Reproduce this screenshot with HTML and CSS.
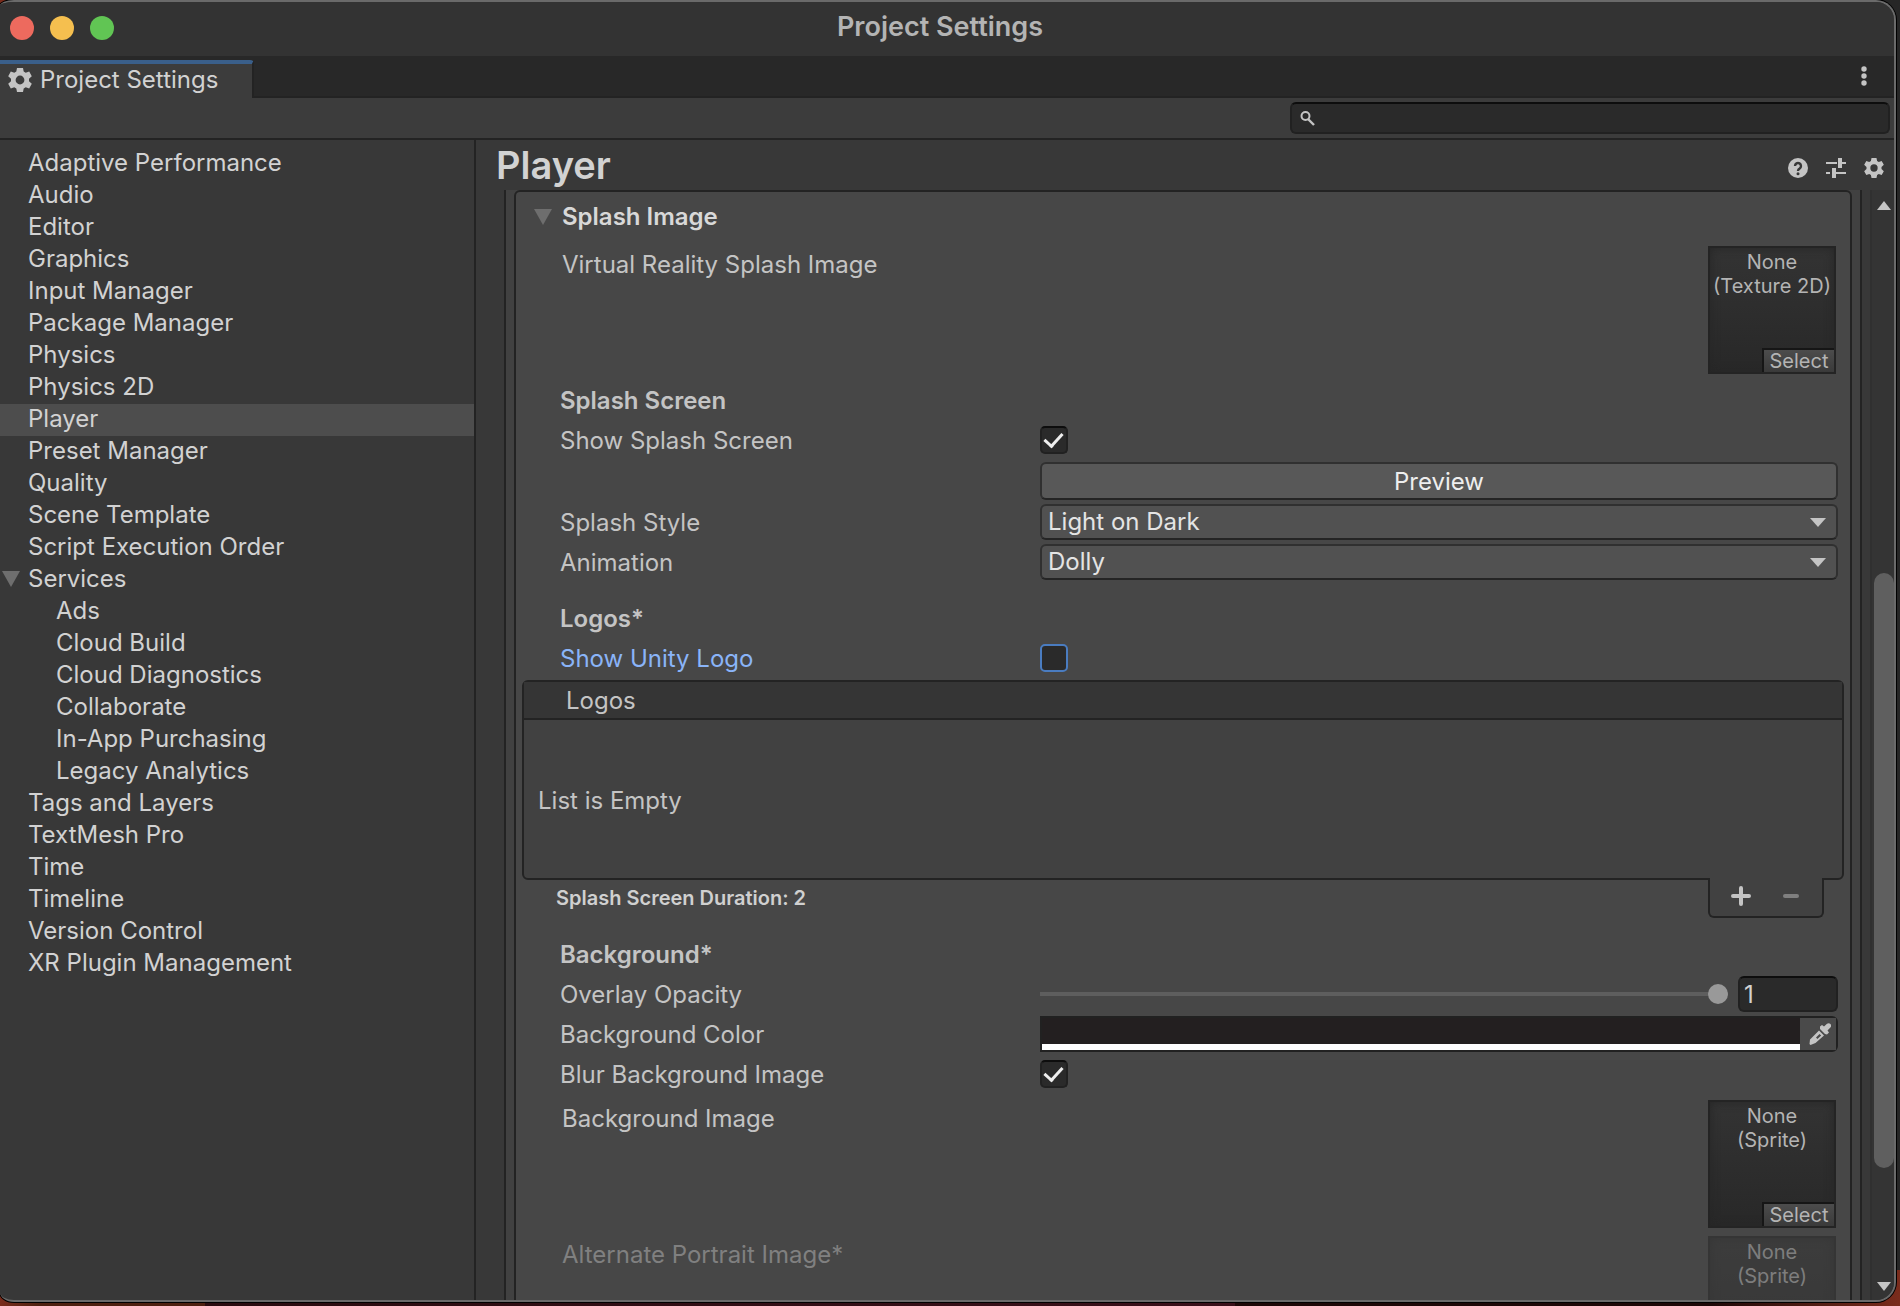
FILE: index.html
```
<!DOCTYPE html>
<html lang="en">
<head>
  <meta charset="UTF-8">
  <meta name="viewport" content="width=device-width, initial-scale=1.0">
  <title>Project Settings</title>
  <link rel="stylesheet" href="styles.css">
</head>
<body>
  <!-- shared icons -->
  <svg class="defs" width="0" height="0">
    <symbol id="gear" viewBox="0 0 24 24">
      <path fill-rule="evenodd" d="M9 0h6l.7 3.6 2 1.2 3.5-1.2 2.6 4.6L21 10.8v2.4l2.8 2.6-2.6 4.6-3.5-1.2-2 1.2L15 24H9l-.7-3.6-2-1.2-3.5 1.2L.2 15.800 3 13.200v-2.400L.2 8.200l2.600-4.600 3.500 1.200 2-1.200zM12 7.600a4.400 4.400 0 1 0 0 8.800 4.400 4.400 0 0 0 0-8.800z"/>
    </symbol>
  </svg>

  <div class="window">
    <header class="titlebar">
      <div class="lights">
        <button class="light red" aria-label="Close"></button>
        <button class="light yellow" aria-label="Minimize"></button>
        <button class="light green" aria-label="Zoom"></button>
      </div>
      <h1>Project Settings</h1>
    </header>

    <div class="tabbar">
      <button class="tab"><svg class="tab_icon"><use href="#gear"/></svg>Project Settings</button>
      <button class="icon_btn more" aria-label="More">
        <svg width="6" height="20" viewBox="0 0 6 20"><circle cx="3" cy="3" r="2.700"/><circle cx="3" cy="10" r="2.700"/><circle cx="3" cy="17" r="2.700"/></svg>
      </button>
    </div>

    <div class="toolbar">
      <label class="search">
        <svg width="16" height="16" viewBox="0 0 16 16"><circle cx="5.500" cy="6" r="4" fill="none" stroke="#c4c4c4" stroke-width="2"/><path d="M8 9l6 6" stroke="#c4c4c4" stroke-width="2.400"/></svg>
        <input type="text" aria-label="Search">
      </label>
    </div>

    <div class="main">
      <nav class="sidebar">
        <ul>
          <li><a href="#">Adaptive Performance</a></li>
          <li><a href="#">Audio</a></li>
          <li><a href="#">Editor</a></li>
          <li><a href="#">Graphics</a></li>
          <li><a href="#">Input Manager</a></li>
          <li><a href="#">Package Manager</a></li>
          <li><a href="#">Physics</a></li>
          <li><a href="#">Physics 2D</a></li>
          <li><a href="#" class="on">Player</a></li>
          <li><a href="#">Preset Manager</a></li>
          <li><a href="#">Quality</a></li>
          <li><a href="#">Scene Template</a></li>
          <li><a href="#">Script Execution Order</a></li>
          <li>
            <a href="#" class="parent"><svg class="fold" viewBox="0 0 18 16"><path d="M0 0h18L9 16z"/></svg>Services</a>
            <ul class="sub">
              <li><a href="#">Ads</a></li>
              <li><a href="#">Cloud Build</a></li>
              <li><a href="#">Cloud Diagnostics</a></li>
              <li><a href="#">Collaborate</a></li>
              <li><a href="#">In-App Purchasing</a></li>
              <li><a href="#">Legacy Analytics</a></li>
            </ul>
          </li>
          <li><a href="#">Tags and Layers</a></li>
          <li><a href="#">TextMesh Pro</a></li>
          <li><a href="#">Time</a></li>
          <li><a href="#">Timeline</a></li>
          <li><a href="#">Version Control</a></li>
          <li><a href="#">XR Plugin Management</a></li>
        </ul>
      </nav>

      <section class="content">
        <div class="content_head">
          <h2>Player</h2>
          <div class="head_icons">
            <button class="icon_btn" aria-label="Help">
              <svg width="20" height="20" viewBox="0 0 20 20"><circle cx="10" cy="10" r="10"/><path d="M7 8a3 3 0 1 1 4.500 2.600Q10 11.400 10 13" fill="none" stroke="#383838" stroke-width="2.400"/><circle cx="10" cy="15.800" r="1.500" fill="#383838"/></svg>
            </button>
            <button class="icon_btn" aria-label="Presets">
              <svg width="20" height="20" viewBox="0 0 20 20"><path d="M0 4h11v2H0zM12 0h4v4h4v2h-4v4h-4zM0 14h4v2H0zM6 10h4v4h10v2H10v4H6z"/></svg>
            </button>
            <button class="icon_btn" aria-label="Settings">
              <svg width="20" height="20"><use href="#gear"/></svg>
            </button>
          </div>
        </div>

        <div class="scroll">
          <div class="outer">
            <div class="inner">
              <h3 class="foldout"><svg class="fold" viewBox="0 0 18 16"><path d="M0 0h18L9 16z"/></svg>Splash Image</h3>

              <div class="object_row">
                <span class="object_label">Virtual Reality Splash Image</span>
                <div class="thumb">None<br>(Texture 2D)<button class="select_btn">Select</button></div>
              </div>

              <div class="fields">
                <h4>Splash Screen</h4>
                <div class="row">
                  <label for="showSplash">Show Splash Screen</label>
                  <input type="checkbox" id="showSplash" checked>
                </div>
                <div class="row preview_row">
                  <button class="preview">Preview</button>
                </div>
                <div class="row">
                  <label for="style">Splash Style</label>
                  <div class="dropdown">
                    <select id="style"><option>Light on Dark</option><option>Dark on Light</option></select>
                  </div>
                </div>
                <div class="row">
                  <label for="anim">Animation</label>
                  <div class="dropdown">
                    <select id="anim"><option>Dolly</option><option>Static</option><option>Custom</option></select>
                  </div>
                </div>

                <h4>Logos*</h4>
                <div class="row changed">
                  <label for="showLogo">Show Unity Logo</label>
                  <input type="checkbox" id="showLogo">
                </div>
              </div>

              <div class="list">
                <div class="list_head">Logos</div>
                <div class="list_body">List is Empty</div>
              </div>
              <div class="list_foot">
                <p>Splash Screen Duration: 2</p>
                <div class="list_btns">
                  <button class="icon_btn" aria-label="Add"><svg width="20" height="20" viewBox="0 0 20 20"><path d="M10 2v16M2 10h16" stroke="#c4c4c4" stroke-width="4" stroke-linecap="round"/></svg></button>
                  <button class="icon_btn" aria-label="Remove" disabled><svg width="20" height="20" viewBox="0 0 20 20"><path d="M4 10h12" stroke="#7f7f7f" stroke-width="4" stroke-linecap="round"/></svg></button>
                </div>
              </div>

              <div class="fields">
                <h4>Background*</h4>
                <div class="row">
                  <label for="opacity">Overlay Opacity</label>
                  <div class="slider">
                    <input type="range" id="opacity" min="0" max="1" step="0.01" value="1">
                    <input type="text" value="1" aria-label="Overlay Opacity value">
                  </div>
                </div>
                <div class="row">
                  <label for="color">Background Color</label>
                  <div class="color">
                    <button class="swatch" id="color" aria-label="Background Color"></button>
                    <button class="picker" aria-label="Pick color">
                      <svg width="22" height="22" viewBox="0 0 22 22"><path d="M11 3.500l2-1.500 2 1.500L18 .8q2-1.200 3.400.2t.2 3.200L18.500 7.500 20 9.500 18 11.500 16 11 11 6z"/><path fill-rule="evenodd" d="M10 7.500l5 5L6.500 20 1.500 22l-1-1 .5-4.500zM10.500 11l-3.500 3.600 1.400 1.400 3.800-3.400z"/></svg>
                    </button>
                  </div>
                </div>
                <div class="row">
                  <label for="blur">Blur Background Image</label>
                  <input type="checkbox" id="blur" checked>
                </div>
              </div>

              <div class="object_row">
                <span class="object_label">Background Image</span>
                <div class="thumb">None<br>(Sprite)<button class="select_btn">Select</button></div>
              </div>
              <div class="object_row disabled">
                <span class="object_label">Alternate Portrait Image*</span>
                <div class="thumb">None<br>(Sprite)</div>
              </div>
            </div>
          </div>

          <div class="scrollbar">
            <svg width="14" height="9" viewBox="0 0 14 9"><path d="M7 0l7 9H0z"/></svg>
            <div class="track"><div class="bar"></div></div>
            <svg width="14" height="9" viewBox="0 0 14 9"><path d="M0 0h14L7 9z"/></svg>
          </div>
        </div>
      </section>
    </div>
  </div>
</body>
</html>
```

FILE: styles.css
```
:root {
  --line: #232323;
  --text: #c4c4c4;
  --label_width: 480px;
}

* {margin: 0; padding: 0; box-sizing: border-box;}
ul {list-style: none;}
a {color: inherit; text-decoration: none;}
button, input, select {font: inherit; color: inherit; border: 0; background: none; outline: none;}
svg {fill: var(--text); flex: none;}
.defs {position: absolute;}

/* desktop behind the window */
body {height: 100vh; padding: 0 4px 4px 0; overflow: hidden; background: linear-gradient(#262626, #262626) right top / 20px calc(100% - 36px) no-repeat, linear-gradient(90deg, #7a2c1c 0, #4d2010 40px, #4d2010 205px, #2a0c10 205px, #3a101a 65%, #1e0808 65%, #1e0808 90%, #7a2c1c 100%); font-family: Inter, "Liberation Sans", sans-serif; font-size: 24px; line-height: 32px; font-optical-sizing: none; color: var(--text);}

.window {display: flex; flex-direction: column; height: 100%; overflow: hidden; border: 2px solid #6a6a6a; border-left: 0; border-radius: 14px 20px 20px 14px / 6px 20px 20px 10px; background: #383838; box-shadow: 0 0 0 1px #000;}

/* title bar */
.titlebar {display: flex; align-items: center; height: 54px; flex: none; padding: 0 128px 2px 10px; background: #333;}
.titlebar h1 {flex: 1; text-align: center; font-size: 27px; font-weight: 600; line-height: 28px; padding-bottom: 2px; color: #b4b4b4;}
.lights {display: flex; gap: 16px;}
.light {width: 24px; height: 24px; border-radius: 50%;}
.red {background: #ed6a5e;}
.yellow {background: #f5bf4f;}
.green {background: #61c554;}

.tabbar {display: flex; justify-content: space-between; height: 42px; flex: none; padding-top: 4px; background: linear-gradient(#282828 40px, var(--line) 40px);}
.tab {display: flex; align-items: center; gap: 8px; width: 254px; padding: 0 0 2px 8px; border-top: 4px solid #3a5f8a; border-right: 2px solid var(--line); border-top-right-radius: 4px; background: #3c3c3c; color: #d2d2d2;}
.tab_icon {width: 24px; height: 24px;}
.icon_btn {display: flex; align-items: center; justify-content: center;}
.more {height: 32px; margin-right: 27px;}

.toolbar {display: flex; justify-content: flex-end; height: 42px; flex: none; padding: 4px; border-bottom: 2px solid var(--line); background: #3c3c3c;}
.search {display: flex; align-items: center; width: 600px; height: 32px; padding: 0 8px; border: 2px solid #212121; border-top-color: #0d0d0d; border-radius: 6px; background: #2a2a2a;}
.search input {flex: 1;}

.main {display: flex; flex: 1; min-height: 0;}

/* sidebar */
.sidebar {width: 476px; flex: none; padding-top: 8px; border-right: 2px solid var(--line); color: #d2d2d2;}
.sidebar a {display: block; padding-left: 28px; height: 32px; line-height: 30px;}
.sidebar .sub a {padding-left: 56px;}
.sidebar .on {background: #4d4d4d;}
.sidebar .parent {display: flex; align-items: center; gap: 8px; padding: 0 0 2px 2px;}
.fold {width: 18px; height: 16px; fill: #6e6e6e;}

/* content */
.content {display: flex; flex-direction: column; flex: 1; min-width: 0;}
.content_head {display: flex; justify-content: space-between; align-items: center; height: 50px; flex: none; padding: 0 10px 0 20px;}
.content_head h2 {font-size: 38px; font-weight: 600; color: #d2d2d2;}
.head_icons {display: flex; gap: 18px; padding-top: 6px;}

.scroll {display: flex; flex: 1; min-height: 0; overflow: hidden;}
.outer {flex: 1; min-width: 0; height: max-content; margin: 0 8px 0 28px; padding: 0 8px; border: solid var(--line); border-width: 0 2px; background: #414141;}
.inner {border: 2px solid var(--line); border-radius: 6px; background: #474747;}

.foldout {display: flex; align-items: center; gap: 10px; height: 54px; padding: 0 0 4px 18px; font-size: 24px; font-weight: 600; color: #d8d8d8;}
.object_row {display: flex; justify-content: space-between; margin-bottom: 8px; padding: 0 14px 0 46px;}
.fields + .object_row {margin-top: 8px;}
.object_label {padding-top: 3px;}
.thumb {position: relative; width: 128px; height: 128px; padding-top: 2px; border: 2px solid #242424; background: linear-gradient(#333, #282828); font-size: 20px; line-height: 24px; text-align: center; color: #b4b4b4; box-shadow: inset 0 0 10px #262626;}
.select_btn {position: absolute; right: 0; bottom: 0; width: 72px; height: 24px; border: solid #161616; border-width: 2px 0 0 2px; background: linear-gradient(#4c4c4c, #3a3a3a); line-height: 20px;}
.disabled {color: #808080;}
.disabled .thumb {opacity: .5;}

.fields {padding: 0 12px 0 44px;}
.fields h4 {height: 40px; padding-top: 3px; font-size: 24px; font-weight: 600;}
.row {display: grid; grid-template-columns: var(--label_width) 1fr; align-items: center; height: 36px; margin-bottom: 4px;}
.row label {padding-top: 2px;}
.row + h4 {margin-top: 20px;}
.row:last-child {margin-bottom: 4px;}
.preview_row {height: 38px;}
.preview {grid-column: 2; height: 38px; padding-top: 2px; border: 2px solid #303030; border-bottom-color: #242424; border-radius: 6px; background: #585858; color: #eee;}
.dropdown {position: relative; height: 36px;}
.dropdown select {appearance: none; width: 100%; height: 36px; padding: 0 6px; border: 2px solid #303030; border-bottom-color: #242424; border-radius: 6px; background: #515151; color: #e4e4e4;}
.dropdown::after {content: ""; position: absolute; right: 12px; top: 14px; border: solid transparent; border-width: 9px 8px 0; border-top-color: var(--text); pointer-events: none;}

input[type=checkbox] {appearance: none; display: flex; align-items: center; justify-content: center; width: 28px; height: 28px; border: 2px solid #212121; border-top-color: #0d0d0d; border-radius: 5px; background: #2a2a2a;}
input[type=checkbox]:checked::before {content: ""; width: 8px; height: 15px; margin: 0 2px 4px 0; border: solid #eee; border-width: 0 3px 3px 0; transform: rotate(42deg);}
.changed {color: #8ab4f8;}
.changed input[type=checkbox] {border-color: #4a7cc0;}

/* logo list */
.list {height: 200px; margin: 0 6px; border: 2px solid var(--line); border-radius: 6px; background: #414141;}
.list_head {height: 38px; padding: 3px 42px 0; border-bottom: 2px solid var(--line); background: #353535;}
.list_body {display: flex; align-items: center; height: 158px; padding: 4px 0 0 14px;}
.list_foot {display: flex; justify-content: space-between; height: 56px; padding: 0 26px 0 40px;}
.list_foot p {padding-top: 2px; font-size: 20px; font-weight: 600; color: #d0d0d0;}
.list_btns {display: flex; justify-content: center; gap: 30px; position: relative; width: 116px; height: 40px; margin-top: -2px; padding-bottom: 2px; border: 2px solid var(--line); border-top: 0; border-radius: 0 0 6px 6px; background: #414141;}

.slider {display: flex; align-items: center; gap: 10px;}
.slider input[type=range] {appearance: none; flex: 1; height: 20px; background: linear-gradient(#5e5e5e, #5e5e5e) center / 100% 4px no-repeat;}
.slider input[type=range]::-webkit-slider-thumb {appearance: none; width: 20px; height: 20px; border-radius: 50%; background: #999;}
.slider input[type=text] {width: 100px; height: 36px; padding: 0 4px; border: 2px solid #212121; border-top-color: #0d0d0d; border-radius: 6px; background: #2a2a2a; color: #d2d2d2;}

.color {display: flex; height: 36px; border: 2px solid #212121; border-radius: 0 6px 6px 0;}
.swatch {flex: 1; background: linear-gradient(#231f20 26px, #fff 26px);}
.picker {display: flex; align-items: center; justify-content: center; width: 36px; padding-left: 4px; background: #4a4a4a;}

/* scrollbar */
.scrollbar {display: flex; flex-direction: column; align-items: center; width: 24px; padding: 11px 0 9px 2px; border-left: 2px solid #303030; background: #343434;}
.track {display: flex; flex: 1; padding: 363px 0 114px;}
.bar {width: 20px; border-radius: 10px; background: #5f5f5f;}
```
